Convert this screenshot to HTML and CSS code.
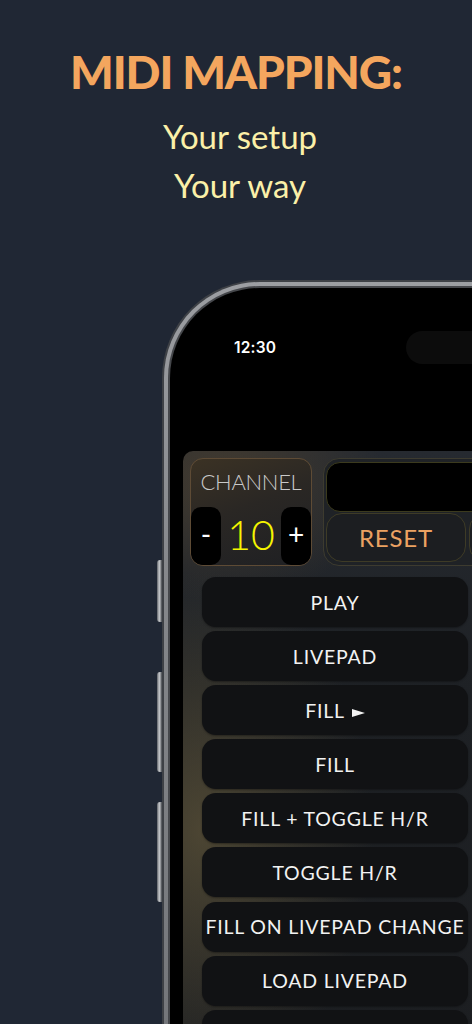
FILE: index.html
```html
<!DOCTYPE html>
<html lang="en">
<head>
<meta charset="utf-8">
<title>MIDI Mapping</title>
<link rel="stylesheet" href="styles.css">
</head>
<body>
<div class="page">
  <header class="hero">
    <h1 class="title">MIDI MAPPING:</h1>
    <p class="subtitle">Your setup<br>Your way</p>
  </header>

  <div class="device">
    <div class="side-buttons">
      <span class="side-btn side-btn-action"></span>
      <span class="side-btn side-btn-vol-up"></span>
      <span class="side-btn side-btn-vol-down"></span>
    </div>
    <div class="phone">
      <div class="frame-mid">
        <div class="frame-in">
          <div class="bezel">
            <div class="status-bar">
              <span class="time">12:30</span>
              <span class="island"></span>
            </div>

            <div class="app">
              <div class="controls">
                <div class="channel-panel">
                  <div class="channel-label">CHANNEL</div>
                  <div class="channel-row">
                    <button class="step-btn">-</button>
                    <span class="channel-value">10</span>
                    <button class="step-btn">+</button>
                  </div>
                </div>
                <div class="display-panel">
                  <div class="display-screen"></div>
                  <div class="display-actions">
                    <button class="reset-btn">RESET</button>
                    <button class="aux-btn"></button>
                  </div>
                </div>
              </div>

              <ul class="mapping-list">
                <li class="mapping-row">PLAY</li>
                <li class="mapping-row">LIVEPAD</li>
                <li class="mapping-row">FILL<span class="tri"></span></li>
                <li class="mapping-row">FILL</li>
                <li class="mapping-row">FILL + TOGGLE H/R</li>
                <li class="mapping-row">TOGGLE H/R</li>
                <li class="mapping-row">FILL ON LIVEPAD CHANGE</li>
                <li class="mapping-row">LOAD LIVEPAD</li>
                <li class="mapping-row"></li>
              </ul>
            </div>
          </div>
        </div>
      </div>
    </div>
  </div>
</div>
</body>
</html>
```

FILE: styles.css
```css
* { box-sizing: border-box; }

html, body {
  margin: 0;
  padding: 0;
  background: #202734;
}

.page {
  width: 472px;
  height: 1024px;
  overflow: hidden;
  background: #202734;
  font-family: "Lato", "Noto Sans", sans-serif;
}

/* ---------- hero ---------- */
.hero {
  padding-top: 49px;
  text-align: center;
}

.title {
  margin: 0;
  font-family: "Lato", sans-serif;
  font-weight: 900;
  font-size: 46px;
  line-height: 46px;
  color: #f4a65e;
  letter-spacing: -1.1px;
}

.subtitle {
  margin: 17px 0 0;
  font-family: "Lato", sans-serif;
  font-weight: 400;
  font-size: 33px;
  line-height: 49px;
  color: #fbf0a8;
  padding-left: 8px;
}

/* ---------- device ---------- */
.device {
  display: flex;
  margin-top: 70px;
}

.side-buttons {
  display: flex;
  flex-direction: column;
  width: 6px;
  margin-left: 157px;
  padding-top: 280px;
}

.side-btn {
  display: block;
  width: 5px;
  border-radius: 3px 0 0 3px;
  background: linear-gradient(90deg, #5d6166 0%, #c9cbce 45%, #8a8d91 75%, #3c3f44 100%);
}

.side-btn-action { height: 62px; }
.side-btn-vol-up { height: 100px; margin-top: 50px; }
.side-btn-vol-down { height: 100px; margin-top: 30px; }

.phone {
  flex: 0 0 auto;
  width: 330px;
  height: 760px;
  border-top-left-radius: 98px;
  background: #3e4146;
  padding: 2px 0 0 2px;
}

.frame-mid {
  height: 100%;
  border-top-left-radius: 96px;
  background: linear-gradient(180deg, #9c9ea2 0%, #85878b 40%, #74767a 100%);
  padding: 4px 0 0 4px;
}

.frame-in {
  height: 100%;
  border-top-left-radius: 92px;
  background: #45474b;
  padding: 2px 0 0 2px;
}

.bezel {
  height: 100%;
  border-top-left-radius: 90px;
  background: #000;
  padding: 43px 0 0 13px;
}

/* ---------- status bar ---------- */
.status-bar {
  display: flex;
  align-items: center;
  height: 33px;
}

.time {
  flex: 0 0 auto;
  width: 223px;
  padding-left: 51px;
  font-family: "Inter", "Liberation Sans", sans-serif;
  font-weight: 600;
  font-size: 15.5px;
  color: #fff;
  letter-spacing: 0.2px;
}

.island {
  flex: 0 0 auto;
  width: 120px;
  height: 33px;
  border-radius: 17px;
  background: #0c0c0c;
}

/* ---------- app ---------- */
.app {
  margin-top: 87px;
  width: 304px;
  height: 600px;
  border-top-left-radius: 10px;
  background:
    radial-gradient(ellipse 170px 260px at 20px 380px, rgba(92, 82, 56, 0.75), rgba(92, 82, 56, 0) 100%),
    radial-gradient(ellipse 160px 120px at 40px 30px, rgba(75, 64, 48, 0.8), rgba(75, 64, 48, 0) 100%),
    linear-gradient(180deg, #262a30 0%, #1e2125 40%, #1c1e21 100%);
  padding-top: 7px;
}

.controls {
  display: flex;
  gap: 11px;
  padding-left: 7px;
  align-items: flex-start;
}

.channel-panel {
  flex: 0 0 auto;
  width: 122px;
  height: 108px;
  border: 1px solid #5e4b35;
  border-radius: 13px;
  background: linear-gradient(160deg, #3b3224 0%, #2a2724 45%, #1f2023 100%);
  display: flex;
  flex-direction: column;
  overflow: hidden;
}

.channel-label {
  height: 48px;
  line-height: 46px;
  text-align: center;
  font-family: "Lato", sans-serif;
  font-weight: 300;
  font-size: 22px;
  color: #c9c9c9;
  letter-spacing: -0.3px;
}

.channel-row {
  flex: 1;
  display: flex;
  align-items: center;
  justify-content: space-between;
}

.step-btn {
  width: 30px;
  height: 100%;
  border: 0;
  border-radius: 10px;
  background: #000;
  color: #fff;
  font-family: "Lato", sans-serif;
  font-size: 28px;
  font-weight: 400;
  padding: 0 0 4px;
  margin: 0;
}

.channel-value {
  font-family: "Lato", sans-serif;
  font-weight: 300;
  font-size: 41px;
  color: #f5f500;
  padding-bottom: 4px;
}

.display-panel {
  flex: 0 0 auto;
  width: 200px;
  height: 108px;
  border: 1px solid #3d3b2f;
  border-radius: 16px;
  padding: 3px 0 0 2px;
  background: #1f2226;
}

.display-screen {
  height: 50px;
  border: 1px solid #3b3a1d;
  border-radius: 14px;
  background: #000;
}

.display-actions {
  display: flex;
  gap: 3px;
  margin-top: 1px;
}

.reset-btn {
  flex: 0 0 auto;
  width: 140px;
  height: 49px;
  border: 1px solid #3e3b26;
  border-radius: 16px;
  background: #1c1e21;
  color: #eba262;
  font-family: "Lato", sans-serif;
  font-weight: 400;
  font-size: 24px;
  letter-spacing: 0.8px;
  padding: 0;
}

.aux-btn {
  flex: 0 0 auto;
  width: 60px;
  height: 49px;
  border: 1px solid #3e3b26;
  border-radius: 16px;
  background: #1c1e21;
  padding: 0;
}

/* ---------- mapping list ---------- */
.mapping-list {
  list-style: none;
  margin: 11px 0 0 19px;
  padding: 0;
  width: 266px;
  display: flex;
  flex-direction: column;
  gap: 4.1px;
}

.mapping-row {
  flex: 0 0 auto;
  height: 50px;
  border-radius: 14px;
  background: #111214;
  display: flex;
  align-items: center;
  justify-content: center;
  font-family: "Lato", sans-serif;
  font-weight: 400;
  font-size: 19.5px;
  color: #f2f2f2;
  letter-spacing: 0.8px;
  white-space: nowrap;
  box-shadow: 0 1px 2px rgba(0, 0, 0, 0.35);
}

.tri {
  display: inline-block;
  width: 0;
  height: 0;
  margin-left: 7px;
  margin-top: 5px;
  border-left: 13px solid #f2f2f2;
  border-top: 4px solid transparent;
  border-bottom: 4px solid transparent;
}
```
